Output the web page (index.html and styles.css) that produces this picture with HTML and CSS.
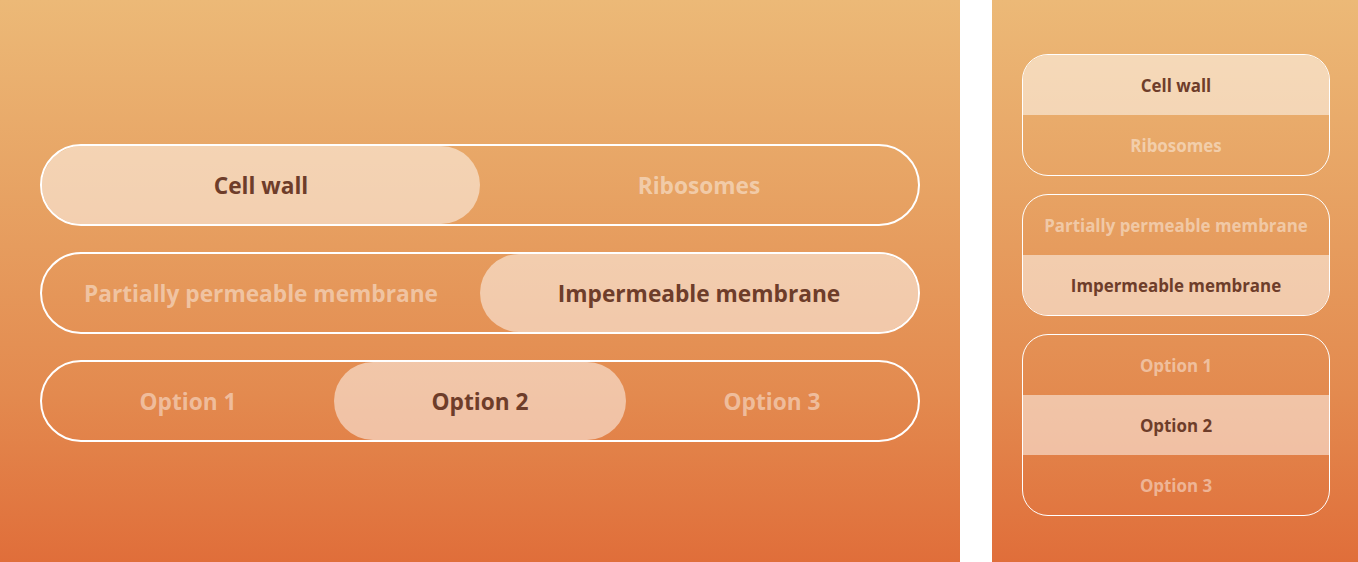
FILE: index.html
```html
<!DOCTYPE html>
<html lang="en">
<head>
	<meta charset="UTF-8">
	<title>toggles</title>
	<link rel="stylesheet" href="styles.css">
</head>
<body>
	<div class="page">
		<div class="panel wide">
			<div class="toggle">
				<div class="seg on">Cell wall</div>
				<div class="seg">Ribosomes</div>
			</div>
			<div class="toggle">
				<div class="seg">Partially permeable membrane</div>
				<div class="seg on">Impermeable membrane</div>
			</div>
			<div class="toggle">
				<div class="seg">Option 1</div>
				<div class="seg on">Option 2</div>
				<div class="seg">Option 3</div>
			</div>
		</div>
		<div class="gap"></div>
		<div class="panel narrow">
			<div class="stack">
				<div class="row on">Cell wall</div>
				<div class="row">Ribosomes</div>
			</div>
			<div class="stack">
				<div class="row">Partially permeable membrane</div>
				<div class="row on">Impermeable membrane</div>
			</div>
			<div class="stack">
				<div class="row">Option 1</div>
				<div class="row on">Option 2</div>
				<div class="row">Option 3</div>
			</div>
		</div>
	</div>
</body>
</html>
```

FILE: styles.css
```css
*{
	margin: 0;
	padding: 0;
	box-sizing: border-box;
}
body{
	font-family: "Open Sans", Lato, sans-serif;
	font-weight: bold;
	background: #fff;
}
.page{
	display: flex;
	height: 562px;
}
.gap{
	width: 32px;
}
.panel{
	height: 100%;
	background: linear-gradient(#ecb977, #e7a263 35%, #e38a4f 70%, #e06e3a);
	display: flex;
	flex-direction: column;
}
.wide{
	width: 960px;
	padding: 144px 40px 0 40px;
	gap: 26px;
}
.narrow{
	flex: 1;
	padding: 54px 28px 0 30px;
	gap: 18px;
}
/* horizontal pills */
.toggle{
	display: flex;
	height: 82px;
	border: 2px solid #fff;
	border-radius: 999px;
}
.seg{
	flex: 1;
	display: flex;
	align-items: center;
	justify-content: center;
	border-radius: 999px;
	font-size: 22.7px;
	color: rgba(255,255,255,0.45);
}
.seg.on, .row.on{
	background: rgba(255,255,255,0.5);
	color: #6e3d2a;
}
/* vertical stacks */
.stack{
	border: 1.5px solid #fff;
	border-radius: 26px;
	overflow: hidden;
}
.row{
	height: 60px;
	display: flex;
	align-items: center;
	justify-content: center;
	font-size: 16.9px;
	color: rgba(255,255,255,0.45);
}
```
